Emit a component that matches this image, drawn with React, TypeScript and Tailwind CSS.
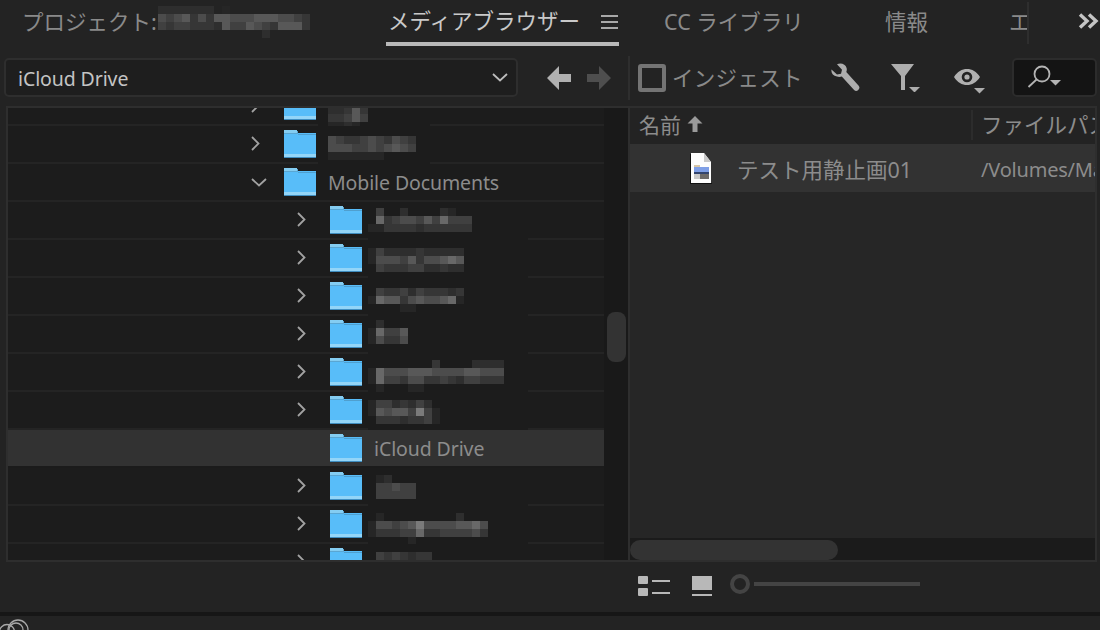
import React from "react";

const SHADES: Record<string, string> = {
  "1": "#262626", "2": "#2e2e2e", "3": "#363636", "4": "#404040", "5": "#4c4c4c",
  "6": "#585858", "7": "#686868", "8": "#7a7a7a", "9": "#8c8c8c",
};

function Pixels({ lines }: { lines: string[] }) {
  return (
    <div className="flex flex-col">
      {lines.map((l, i) => (
        <div key={i} className="flex h-[8px]">
          {l.split("").map((c, j) => (
            <div key={j} className="w-[8px] h-[8px]" style={{ backgroundColor: SHADES[c] ?? "transparent" }} />
          ))}
        </div>
      ))}
    </div>
  );
}

function Folder() {
  return (
    <svg width="32" height="28" viewBox="0 0 32 28" className="shrink-0">
      <rect x="0" y="0" width="13" height="4" fill="#84cdf2" />
      <rect x="13" y="1" width="1" height="3" fill="#5aa6d2" />
      <rect x="0" y="3" width="32" height="25" fill="#58bdf9" />
      <rect x="0" y="3" width="14" height="1" fill="#5aa6d2" />
      <rect x="14" y="4" width="18" height="1" fill="#4f9fcf" />
      <rect x="0" y="24" width="32" height="3" fill="#93d5f8" />
      <rect x="0" y="27" width="32" height="1" fill="#3f8dc0" />
    </svg>
  );
}

function ChevR() {
  return (
    <svg width="9" height="15" viewBox="0 0 9 15" fill="none" stroke="#a2a2a2" strokeWidth="1.8" className="-mt-[2px]">
      <path d="M1 1l6.500 6.500L1 14" />
    </svg>
  );
}

function ChevD() {
  return (
    <svg width="16" height="9" viewBox="0 0 16 9" fill="none" stroke="#a2a2a2" strokeWidth="1.8">
      <path d="M1 1l7 6.500L15 1" />
    </svg>
  );
}

type Row = {
  deep: boolean;
  chev: "r" | "d" | null;
  label?: string;
  sel?: boolean;
  pix?: string[];
  top?: number;
};

const rows: Row[] = [
  { deep: false, chev: "r", top: 18, pix: ["22363", "33464", "1121"] },
  { deep: false, chev: "r", top: 10, pix: ["54334543543", "55544545654", "1111111"] },
  { deep: false, chev: "d", label: "Mobile Documents" },
  { deep: true, chev: "r", top: 6, pix: [".4..2....21", ".734554647444", "1133332333333"] },
  { deep: true, chev: "r", top: 8, pix: ["142222322222", "155546355676", ".43334422322"] },
  { deep: true, chev: "r", top: 10, pix: [".43342433323", "176635655671", "....11"] },
  { deep: true, chev: "r", top: 4, pix: [".2", "17446", "15335"] },
  { deep: true, chev: "r", top: 6, pix: ["........3....2222", "17555666555566555", "17443553343244333", ".1...11"] },
  { deep: true, chev: "r", top: 8, pix: ["14423242", "165664841", ".33323341"] },
  { deep: true, chev: null, label: "iCloud Drive", sel: true },
  { deep: true, chev: "r", top: 7, pix: [".12", ".44544", ".44444"] },
  { deep: true, chev: "r", top: 7, pix: [".1.........2", "155456855556675", "133344733444453", ".....1"] },
  { deep: true, chev: "r", top: 8, pix: [".4343233"] },
];

const jp = "font-['Noto_Sans','Noto_Sans_CJK_JP',sans-serif]";

function TreeRow({ r }: { r: Row }) {
  return (
    <div
      className={`relative flex items-center h-[38px] border-b-2 ${r.sel ? "bg-[#323232] border-[#1b1b1b]" : "border-[#242424]"} ${r.deep ? "pl-[289px]" : "pl-[243px]"}`}
    >
      <div className="w-[33px] shrink-0 flex items-center">
        {r.chev === "r" ? <ChevR /> : r.chev === "d" ? <ChevD /> : null}
      </div>
      <Folder />
      {r.label ? (
        <span className="ml-[12px] mt-[2px] text-[19.5px] leading-none text-[#8c8c8c] font-['Noto_Sans',sans-serif] tracking-[-0.1px]">{r.label}</span>
      ) : null}
      {r.pix ? (
        <div className={`absolute top-0 -bottom-[2px] bg-[#1c1c1c] ${r.deep ? "left-[360px] w-[160px]" : "left-[310px] w-[112px]"}`}>
          <div className="absolute left-0" style={{ top: r.top }}>
            <div className={r.deep ? "ml-0" : "ml-[10px]"}>
              <Pixels lines={r.pix} />
            </div>
          </div>
        </div>
      ) : null}
    </div>
  );
}

export default function App() {
  return (
    <div className={`w-[1100px] h-[630px] overflow-hidden bg-[#232323] flex flex-col ${jp}`}>
      {/* tabs */}
      <div className="h-[46px] shrink-0 flex text-[21.5px] leading-none text-[#8a8a8a]">
        <div className="w-[386px] shrink-0 flex items-center pl-[22px] pb-[3px]">
          <span className="whitespace-nowrap">プロジェクト:</span>
          <div className="ml-[1px]">
            <Pixels lines={["2222222.1", "5456353665556665543", "4344333264465436663", ".............2"]} />
          </div>
        </div>
        <div className="w-[233px] shrink-0 flex items-center border-b-4 border-[#b9b9b9] pl-[2px] text-[#c9c9c9]">
          <span className="whitespace-nowrap">メディアブラウザー</span>
          <svg width="17" height="14" viewBox="0 0 17 14" className="ml-[21px] mt-[2px] shrink-0">
            <path d="M0 1h17M0 7h17M0 13h17" stroke="#a8a8a8" strokeWidth="2" />
          </svg>
        </div>
        <div className="ml-[45px] w-[221px] shrink-0 flex items-center pb-[3px]">CC ライブラリ</div>
        <div className="w-[124px] shrink-0 flex items-center pb-[3px]">情報</div>
        <div className="w-[18px] shrink-0 overflow-hidden flex items-center pb-[3px] whitespace-nowrap">エフェクト</div>
        <div className="w-[2px] h-[42px] bg-[#2e2e2e] mt-[2px] shrink-0" />
        <div className="ml-[49px] flex items-center pb-[4px]">
          <svg width="21" height="16" viewBox="0 0 21 16" fill="none" stroke="#c4c4c4" strokeWidth="3.4">
            <path d="M2 1.500L9 8l-7 6.500M11 1.500L18 8l-7 6.500" />
          </svg>
        </div>
      </div>

      {/* toolbar */}
      <div className="h-[60px] shrink-0 flex items-center pl-[4px] pt-[3px]">
        <div className="w-[514px] h-[39px] shrink-0 rounded-[5px] bg-[#1e1e1e] border-2 border-[#2e2e2e] flex items-center justify-between pl-[12px] pr-[8px]">
          <span className="mt-[2px] text-[19.5px] leading-none text-[#c4c4c4] font-['Noto_Sans',sans-serif] tracking-[-0.1px]">iCloud Drive</span>
          <svg width="16" height="9" viewBox="0 0 16 9" fill="none" stroke="#bdbdbd" strokeWidth="1.8"><path d="M1 1l7 6.500L15 1" /></svg>
        </div>
        <svg width="24" height="24" viewBox="0 0 24 24" className="ml-[29px] shrink-0">
          <path d="M0 12L12 0v8h12v8H12v8z" fill="#b0b0b0" />
        </svg>
        <svg width="24" height="24" viewBox="0 0 24 24" className="ml-[16px] shrink-0">
          <path d="M24 12L12 0v8H0v8h12v8z" fill="#4e4e4e" />
        </svg>
        <div className="ml-[17px] w-[2px] h-[44px] bg-[#2e2e2e] shrink-0" />
        <div className="ml-[8px] w-[28px] h-[28px] border-[4px] border-[#747474] rounded-[3px] shrink-0" />
        <span className="ml-[6px] text-[21.5px] leading-none text-[#8a8a8a] whitespace-nowrap w-[131px] shrink-0 tracking-[0.3px]">インジェスト</span>
        <svg width="30" height="30" viewBox="0 0 30 30" className="ml-[27px] shrink-0">
          <path d="M1.500 6.500L7 11.500l4-.8 1-4L7 1.200C11-.6 15.500 1 16.600 5c.4 1.500.2 2.900-.3 4.100l12.400 13.600c1 1.100 1 2.800-.1 3.900l-.6.6c-1.100 1-2.800 1-3.900-.2L11.800 13.500c-1.500.5-3.200.6-4.800.1C3 12.400.9 10.200 1.500 6.500z" fill="#adadad" />
        </svg>
        <svg width="29" height="28" viewBox="0 0 29 28" className="ml-[31px] shrink-0">
          <path d="M0 0h23L14 12v14h-4V12z" fill="#adadad" />
          <path d="M18 23h11l-5.500 5.500z" fill="#adadad" />
        </svg>
        <svg width="31" height="25" viewBox="0 0 31 25" className="ml-[34px] mt-[8px] shrink-0">
          <path fillRule="evenodd" d="M0 8C3.500 2.500 8 0 13 0s9.500 2.500 13 8c-3.500 5.500-8 8-13 8S3.500 13.500 0 8zm13-5.300a5.300 5.300 0 1 0 0 10.600 5.300 5.300 0 0 0 0-10.600z" fill="#b0b0b0" />
          <circle cx="13" cy="8" r="2.600" fill="#b0b0b0" />
          <path d="M20 19h11l-5.500 5.500z" fill="#adadad" />
        </svg>
        <div className="ml-[27px] w-[85px] h-[39px] shrink-0 rounded-[5px] bg-[#141414] border-2 border-[#2c2c2c] flex items-center pl-[13px]">
          <svg width="36" height="32" viewBox="0 0 36 32">
            <circle cx="15" cy="12" r="7.500" fill="none" stroke="#b4b4b4" strokeWidth="1.800" />
            <path d="M9.500 17.500L1.500 25" stroke="#b4b4b4" strokeWidth="1.800" fill="none" />
            <path d="M23 18h11l-5.500 5.500z" fill="#b4b4b4" />
          </svg>
        </div>
      </div>

      {/* main panels */}
      <div className="ml-[6px] w-[1091px] h-[456px] shrink-0 border-2 border-[#2e2e2e] flex overflow-hidden">
        <div className="w-[596px] shrink-0 bg-[#1c1c1c] overflow-hidden">
          <div className="-mt-[20px]">
            {rows.map((r, i) => (
              <TreeRow key={i} r={r} />
            ))}
          </div>
        </div>
        <div className="w-[24px] shrink-0 bg-[#191919] pl-[3px] pt-[204px]">
          <div className="w-[19px] h-[50px] rounded-[8px] bg-[#333333]" />
        </div>
        <div className="w-[2px] shrink-0 bg-[#2e2e2e]" />
        <div className="flex-1 min-w-0 bg-[#262626] flex flex-col overflow-hidden">
          <div className="h-[36px] shrink-0 bg-[#232323] flex items-center text-[21px] leading-none text-[#8c8c8c] pb-[2px]">
            <div className="w-[341px] shrink-0 flex items-center pl-[9px]">
              <span className="w-[48px] whitespace-nowrap">名前</span>
              <svg width="16" height="16" viewBox="0 0 16 16" className="-mt-[2px]"><path d="M8 0l7.500 7.500H10.500V16h-5V7.500H.5z" fill="#9a9a9a" /></svg>
            </div>
            <div className="w-[2px] h-[30px] bg-[#2c2c2c] shrink-0" />
            <span className="ml-[8px] whitespace-nowrap text-[21.5px]">ファイルパス</span>
          </div>
          <div className="h-[48px] shrink-0 bg-[#323232] flex items-center leading-none text-[#8c8c8c]">
            <svg width="22" height="31" viewBox="0 0 22 31" className="ml-[60px] shrink-0">
              <path d="M1 0h13l7 9v21H1z" fill="#fdfdfd" />
              <path d="M14 0l7 9h-7z" fill="#c9c9c9" />
              <path d="M0 1h1v29h21v1H0z" fill="#111" />
              <rect x="4" y="12" width="6" height="2" fill="#d8c7a8" />
              <rect x="4" y="14" width="15" height="5" fill="#7f9fe6" />
              <rect x="4" y="19" width="15" height="2" fill="#32446e" />
              <rect x="4" y="21" width="6" height="5" fill="#c9c9c9" />
              <rect x="10" y="21" width="9" height="5" fill="#6d6a68" />
            </svg>
            <span className="ml-[25px] mt-[3px] w-[244px] shrink-0 whitespace-nowrap text-[21.5px]">テスト用静止画01</span>
            <span className="mt-[3px] whitespace-nowrap text-[20px] tracking-[-0.2px]">/Volumes/Macintosh</span>
          </div>
          <div className="flex-1" />
          <div className="h-[22px] shrink-0 bg-[#1b1b1b] pt-[2px]">
            <div className="w-[208px] h-[20px] rounded-full bg-[#333333]" />
          </div>
        </div>
      </div>

      {/* footer */}
      <div className="h-[50px] shrink-0 flex items-start pl-[638px] pt-[12px]">
        <svg width="32" height="20" viewBox="0 0 32 20" className="mt-[2px] shrink-0">
          <rect x="0" y="0" width="10" height="8" rx="1" fill="#b8b8b8" />
          <rect x="0" y="12" width="10" height="8" rx="1" fill="#b8b8b8" />
          <rect x="14" y="4" width="18" height="2" fill="#b8b8b8" />
          <rect x="14" y="16" width="18" height="2" fill="#b8b8b8" />
        </svg>
        <svg width="20" height="20" viewBox="0 0 20 20" className="ml-[22px] mt-[2px] shrink-0">
          <rect x="0" y="0" width="20" height="14" fill="#b8b8b8" />
          <rect x="0" y="18" width="20" height="2" fill="#b8b8b8" />
        </svg>
        <div className="ml-[18px] w-[20px] h-[20px] rounded-full border-[4px] border-[#444444] shrink-0" />
        <div className="ml-[4px] mt-[8px] w-[166px] h-[4px] bg-[#444444] shrink-0" />
      </div>
      <div className="h-[4px] shrink-0 bg-[#161616]" />
      <div className="h-[14px] shrink-0 overflow-hidden">
        <svg width="30" height="14" viewBox="0 0 30 14" fill="none" stroke="#a8a8a8" strokeWidth="1.300">
          <circle cx="18" cy="14" r="10" />
          <circle cx="16" cy="14" r="7" />
          <circle cx="7" cy="16" r="7.500" />
        </svg>
      </div>
    </div>
  );
}
